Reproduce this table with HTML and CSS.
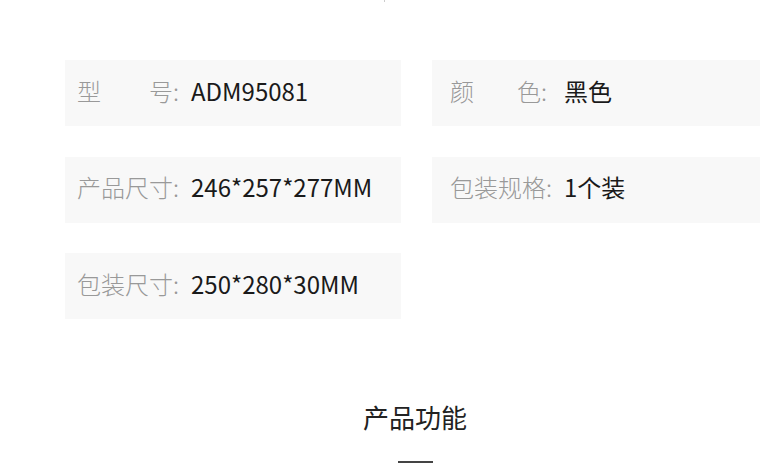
FILE: index.html
```
<!DOCTYPE html>
<html lang="zh-CN">

<head>
    <meta charset="UTF-8">
    <meta name="viewport" content="width=device-width, initial-scale=1.0">
    <title>产品参数</title>
    <link rel="stylesheet" href="styles.css">
</head>

<body>
    <div class="wrap">
        <div class="dot"></div>
        <div class="params">
            <div class="item">
                <span class="label">型&emsp;&emsp;号:</span>
                <span class="value">ADM95081</span>
            </div>
            <div class="item item-right">
                <span class="label">颜<i class="gap"></i>色:</span>
                <span class="value">黑色</span>
            </div>
            <div class="item">
                <span class="label">产品尺寸:</span>
                <span class="value">246*257*277MM</span>
            </div>
            <div class="item item-right">
                <span class="label">包装规格:</span>
                <span class="value">1个装</span>
            </div>
            <div class="item">
                <span class="label">包装尺寸:</span>
                <span class="value">250*280*30MM</span>
            </div>
        </div>
        <div class="title">
            <h2>产品功能</h2>
            <i class="line"></i>
        </div>
    </div>
</body>

</html>
```

FILE: styles.css
```
* {
    padding: 0;
    margin: 0;
}

html,
body {
    overflow: hidden;
    background-color: #fff;
}

body {
    font-family: "Noto Sans CJK SC", "Noto Sans", sans-serif;
    color: #1a1a1a;
}

.dot {
    width: 1px;
    height: 2px;
    margin-left: 384px;
    background-color: #ccc;
}

.params {
    display: grid;
    grid-template-columns: 336px 328px;
    column-gap: 31px;
    row-gap: 30.5px;
    padding: 58px 0 0 65px;
}

.item {
    display: flex;
    align-items: center;
    height: 60px;
    padding: 0 0 6px 12px;
    background-color: #f8f8f8;
    font-size: 24px;
}

.item-right {
    padding-left: 18px;
}

.label {
    flex-shrink: 0;
    width: 114px;
    color: #999;
    font-weight: 300;
    white-space: nowrap;
}

.gap {
    display: inline-block;
    width: 43px;
}

.value {
    color: #1a1a1a;
}

.title {
    display: flex;
    flex-direction: column;
    align-items: center;
    padding: 80px 0 0 68px;
}

.title h2 {
    font-size: 26px;
    font-weight: 400;
    line-height: 36px;
    color: #222;
}

.line {
    width: 35px;
    height: 2px;
    margin-top: 26px;
    background-color: #444;
}
```
